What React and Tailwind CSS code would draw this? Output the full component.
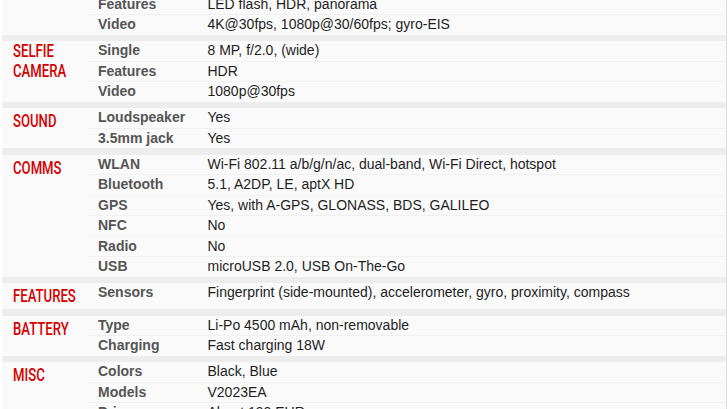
import React from 'react';

const sections = [
  {
    title: [],
    rows: [
      ['Features', 'LED flash, HDR, panorama'],
      ['Video', '4K@30fps, 1080p@30/60fps; gyro-EIS'],
    ],
  },
  {
    title: ['SELFIE', 'CAMERA'],
    rows: [
      ['Single', '8 MP, f/2.0, (wide)'],
      ['Features', 'HDR'],
      ['Video', '1080p@30fps'],
    ],
  },
  {
    title: ['SOUND'],
    rows: [
      ['Loudspeaker', 'Yes'],
      ['3.5mm jack', 'Yes'],
    ],
  },
  {
    title: ['COMMS'],
    rows: [
      ['WLAN', 'Wi-Fi 802.11 a/b/g/n/ac, dual-band, Wi-Fi Direct, hotspot'],
      ['Bluetooth', '5.1, A2DP, LE, aptX HD'],
      ['GPS', 'Yes, with A-GPS, GLONASS, BDS, GALILEO'],
      ['NFC', 'No'],
      ['Radio', 'No'],
      ['USB', 'microUSB 2.0, USB On-The-Go'],
    ],
  },
  {
    title: ['FEATURES'],
    rows: [
      ['Sensors', 'Fingerprint (side-mounted), accelerometer, gyro, proximity, compass'],
    ],
  },
  {
    title: ['BATTERY'],
    rows: [
      ['Type', 'Li-Po 4500 mAh, non-removable'],
      ['Charging', 'Fast charging 18W'],
    ],
  },
  {
    title: ['MISC'],
    rows: [
      ['Colors', 'Black, Blue'],
      ['Models', 'V2023EA'],
      ['Price', 'About 190 EUR'],
    ],
  },
];

const Section = ({ title, rows, last }) => {
  const twoLines = title.length > 1;
  return (
    <>
      <div className="flex">
        {/* section heading */}
        <div
          className={`w-[86px] shrink-0 pl-[10.7px] ${twoLines ? 'pt-0' : 'pt-[3px] min-h-[26px]'} text-[18px] leading-[20px] font-medium text-[#d50000] whitespace-nowrap`}
          style={{ fontFamily: 'Roboto, "Liberation Sans", sans-serif' }}
        >
          <span className="inline-block origin-left scale-x-[0.73]">
            {title.map((t, i) => (
              <div key={i}>{t}</div>
            ))}
          </span>
        </div>

        {/* spec rows */}
        <div className="flex-1 min-w-0">
          {rows.map(([label, value], i) => (
            <div
              key={label}
              className={`flex h-[19.5px] leading-[19.5px] text-[14px] ${i > 0 ? 'border-t border-[#f0f0f0]' : ''}`}
              style={{ boxSizing: 'content-box' }}
            >
              <div className="w-[109.5px] shrink-0 pl-[10px] font-bold text-[#555] whitespace-nowrap">
                {label}
              </div>
              <div className="pl-[10px] text-[#1e1e1e] whitespace-nowrap">{value}</div>
            </div>
          ))}
        </div>
      </div>
      {!last && <div className="h-[6.5px] bg-[#ededed]" />}
    </>
  );
};

export default function App() {
  return (
    <div
      className="w-[728px] h-[409px] overflow-hidden bg-white"
      style={{ fontFamily: '"Liberation Sans", Arial, sans-serif' }}
    >
      <div className="ml-[2px] w-[725px] bg-[#fafafa] border-r border-[#dcdcdc] mt-[-5.5px]">
        {sections.map((s, i) => (
          <Section key={i} {...s} last={i === sections.length - 1} />
        ))}
      </div>
    </div>
  );
}
